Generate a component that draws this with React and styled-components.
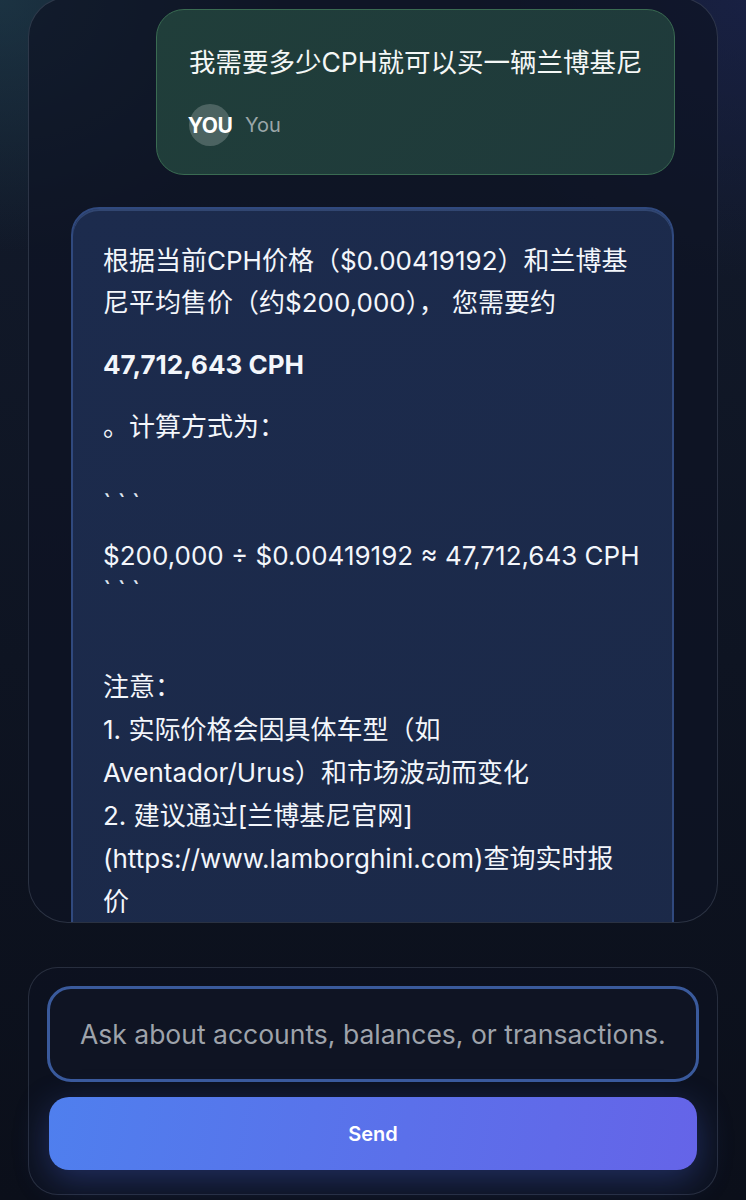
import React from 'react';
import styled, { createGlobalStyle } from 'styled-components';

const GlobalStyle = createGlobalStyle`
  html, body {
    margin: 0;
    padding: 0;
    height: 1200px;
    overflow: hidden;
  }
  body {
    font-family: Inter, "Noto Sans CJK SC", "Noto Sans", sans-serif;
    background:
      radial-gradient(ellipse 420px 360px at 0% 0%, rgba(34, 70, 84, 0.55), transparent 70%),
      radial-gradient(ellipse 420px 400px at 100% 0%, rgba(28, 36, 82, 0.6), transparent 70%),
      linear-gradient(180deg, #131b2c 0%, #0e1422 55%, #0b0f1a 100%);
    color: #f1f5f9;
  }
`;

const Page = styled.div`
  display: flex;
  flex-direction: column;
  padding: 0 28px;
  height: 1200px;
  box-sizing: border-box;
`;

const ChatPanel = styled.div`
  margin-top: -3px;
  height: 926px;
  box-sizing: border-box;
  border: 1px solid rgba(148, 163, 184, 0.22);
  border-radius: 40px;
  background: rgba(14, 20, 36, 0.72);
  overflow: hidden;
`;

const Messages = styled.div`
  display: flex;
  flex-direction: column;
  gap: 32px;
  padding: 11px 42px 0;
`;

const UserBubble = styled.div`
  align-self: flex-end;
  width: 519px;
  box-sizing: border-box;
  padding: 32px 32px 28px;
  border: 1.5px solid #3a6b52;
  border-radius: 28px;
  background: linear-gradient(135deg, #203e3a 0%, #1f3a3b 100%);
`;

const UserText = styled.div`
  font-size: 26.5px;
  line-height: 40px;
  color: #f4f7f6;
  white-space: nowrap;
`;

const Meta = styled.div`
  display: flex;
  align-items: center;
  gap: 14px;
  margin-top: 22px;
`;

const Avatar = styled.div`
  width: 42px;
  height: 42px;
  border-radius: 50%;
  background: rgba(255, 255, 255, 0.2);
  display: flex;
  align-items: center;
  justify-content: center;
  font-size: 21px;
  font-weight: 700;
  letter-spacing: -0.5px;
  color: #ffffff;
  white-space: nowrap;
`;

const Author = styled.span`
  font-size: 20px;
  color: #9aa6a8;
`;

const BotBubble = styled.div`
  align-self: flex-start;
  width: 603px;
  box-sizing: border-box;
  padding: 31px 30px 90px;
  border: 2px solid #30497e;
  border-radius: 28px;
  background: linear-gradient(160deg, #1c2b4d 0%, #1b2948 100%);
  box-shadow: inset 0 2px 0 rgba(90, 120, 180, 0.35);
`;

const Para = styled.div`
  margin-top: ${p => p.$gap || 0}px;
  font-size: 26px;
  line-height: ${p => p.$lh || 42}px;
  font-weight: ${p => (p.$bold ? 700 : 400)};
  color: #f3f6fb;
  white-space: pre-wrap;
`;

const Fence = styled.span`
  letter-spacing: 6px;
  color: #dfe5f0;
`;

const Composer = styled.div`
  margin-top: 44px;
  border: 1px solid rgba(148, 163, 184, 0.2);
  border-radius: 30px;
  padding: 18px 18px 24px;
  display: flex;
  flex-direction: column;
  gap: 15px;
  background: rgba(14, 19, 33, 0.6);
`;

const InputBox = styled.div`
  height: 96px;
  box-sizing: border-box;
  border: 3px solid #3a5a9c;
  border-radius: 24px;
  background: #0f1423;
  display: flex;
  align-items: center;
  padding: 0 24px 0 30px;
`;

const Placeholder = styled.span`
  font-size: 26.5px;
  color: #9ea3ab;
  white-space: nowrap;
`;

const SendButton = styled.button`
  margin: 0 2px;
  height: 73px;
  border: none;
  border-radius: 20px;
  background: linear-gradient(100deg, #4f7fee 0%, #5b70ea 55%, #6564e8 100%);
  box-shadow: 0 10px 34px rgba(72, 100, 220, 0.35);
  color: #ffffff;
  font-family: Inter, "Noto Sans", sans-serif;
  font-size: 20px;
  font-weight: 600;
`;

export default function App() {
  return (
    <>
      <GlobalStyle />
      <Page>
        <ChatPanel>
          <Messages>
            <UserBubble>
              <UserText>我需要多少CPH就可以买一辆兰博基尼</UserText>
              <Meta>
                <Avatar>YOU</Avatar>
                <Author>You</Author>
              </Meta>
            </UserBubble>
            <BotBubble>
              <Para>根据当前CPH价格（$0.00419192）和兰博基尼平均售价（约$200,000）， 您需要约</Para>
              <Para $gap={20} $bold>47,712,643 CPH</Para>
              <Para $gap={20}>。计算方式为：</Para>
              <Para $gap={35}><Fence>```</Fence></Para>
              <Para $gap={13} $lh={35}>
                {'$200,000 ÷ $0.00419192 ≈ 47,712,643 CPH\n'}
                <Fence>```</Fence>
              </Para>
              <Para $gap={57} $lh={43}>
                {'注意：\n1. 实际价格会因具体车型（如Aventador/Urus）和市场波动而变化\n2. 建议通过[兰博基尼官网](https://www.lamborghini.com)查询实时报\n价'}
              </Para>
            </BotBubble>
          </Messages>
        </ChatPanel>
        <Composer>
          <InputBox>
            <Placeholder>Ask about accounts, balances, or transactions.</Placeholder>
          </InputBox>
          <SendButton>Send</SendButton>
        </Composer>
      </Page>
    </>
  );
}
